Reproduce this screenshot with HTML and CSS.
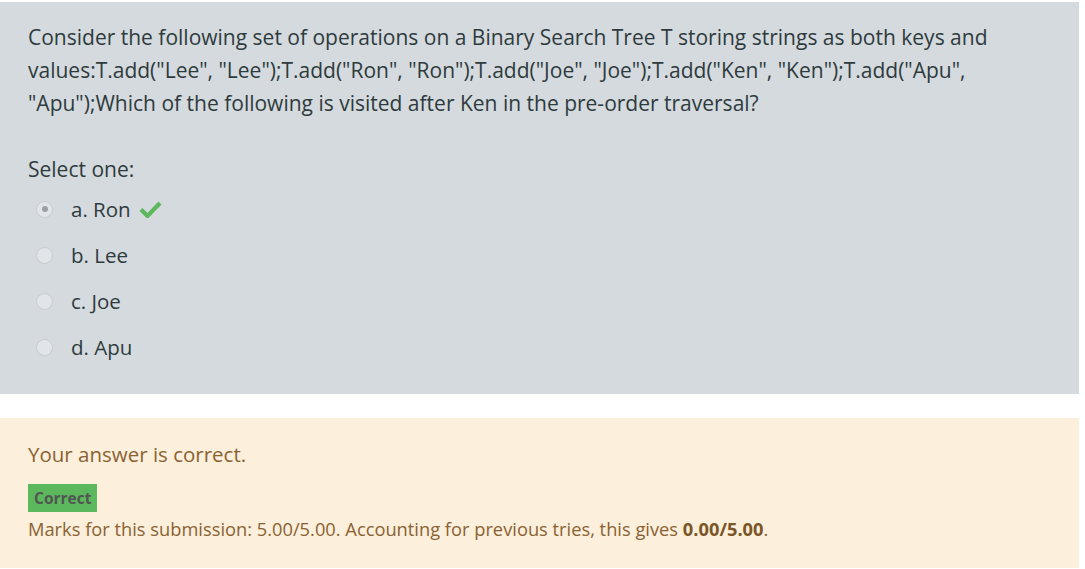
FILE: index.html
```html
<!DOCTYPE html>
<html>
<head>
<meta charset="utf-8">
<link rel="stylesheet" href="styles.css">
</head>
<body>
<div class="formulation">
  <div class="qtext">Consider the following set of operations on a Binary Search Tree T storing strings as both keys and values:T.add("Lee", "Lee");T.add("Ron", "Ron");T.add("Joe", "Joe");T.add("Ken", "Ken");T.add("Apu", "Apu");Which of the following is visited after Ken in the pre-order traversal?</div>
  <div class="prompt">Select one:</div>
  <div class="answers">
    <div class="opt"><span class="radio checked"></span><span class="label">a. Ron</span>
      <svg class="tick" width="23" height="18" viewBox="0 0 23 18"><path d="M2 9.5 L8.5 16 L21 3" fill="none" stroke="#5cb85c" stroke-width="4.2" stroke-linecap="butt" stroke-linejoin="miter"/></svg>
    </div>
    <div class="opt"><span class="radio"></span><span class="label">b. Lee</span></div>
    <div class="opt"><span class="radio"></span><span class="label">c. Joe</span></div>
    <div class="opt"><span class="radio"></span><span class="label">d. Apu</span></div>
  </div>
</div>
<div class="outcome">
  <div class="feedback">Your answer is correct.</div>
  <span class="badge">Correct</span>
  <div class="marks">Marks for this submission: 5.00/5.00. Accounting for previous tries, this gives <b>0.00/5.00</b>.</div>
</div>
</body>
</html>
```
FILE: styles.css
```css
html, body {
  margin: 0;
  padding: 0;
  background: #ffffff;
}
body {
  font-family: "Open Sans", "Noto Sans", sans-serif;
  color: #373a3c;
}
.formulation {
  margin-top: 2px;
  width: 1079px;
  box-sizing: border-box;
  background: #d4dadd;
  padding: 19px 60px 23px 28px;
  height: 392px;
}
.qtext {
  font-size: 21px;
  line-height: 33px;
  color: #2f3a3d;
}
.prompt {
  margin-top: 33px;
  font-size: 21px;
  line-height: 33px;
  color: #2f3a3d;
}
.answers {
  display: flex;
  flex-direction: column;
}
.opt {
  display: flex;
  align-items: center;
  height: 46px;
  padding-left: 8px;
}
.radio {
  width: 17px;
  height: 17px;
  border-radius: 50%;
  border: 1px solid #c6ccce;
  background: #e1e5e7;
  box-sizing: border-box;
  position: relative;
  flex: none;
}
.radio.checked::after {
  content: "";
  position: absolute;
  left: 4.5px;
  top: 4.5px;
  width: 6px;
  height: 6px;
  border-radius: 50%;
  background: #9aa0a3;
}
.label {
  margin-left: 18px;
  font-size: 20.5px;
  color: #2f3a3d;
}
.tick {
  margin-left: 8px;
}
.outcome {
  margin-top: 24px;
  width: 1079px;
  height: 150px;
  box-sizing: border-box;
  background: #fcefdc;
  padding: 22px 28px 0 28px;
  color: #8a6232;
}
.feedback {
  font-size: 20.5px;
  line-height: 28px;
}
.badge {
  display: inline-block;
  margin-top: 16px;
  background: #5cb85c;
  color: #525652;
  font-weight: bold;
  font-size: 15.5px;
  line-height: 28px;
  padding: 0 6px;
}
.marks {
  font-size: 18.3px;
  line-height: 34px;
}
.marks b {
  color: #7a5526;
}
```
